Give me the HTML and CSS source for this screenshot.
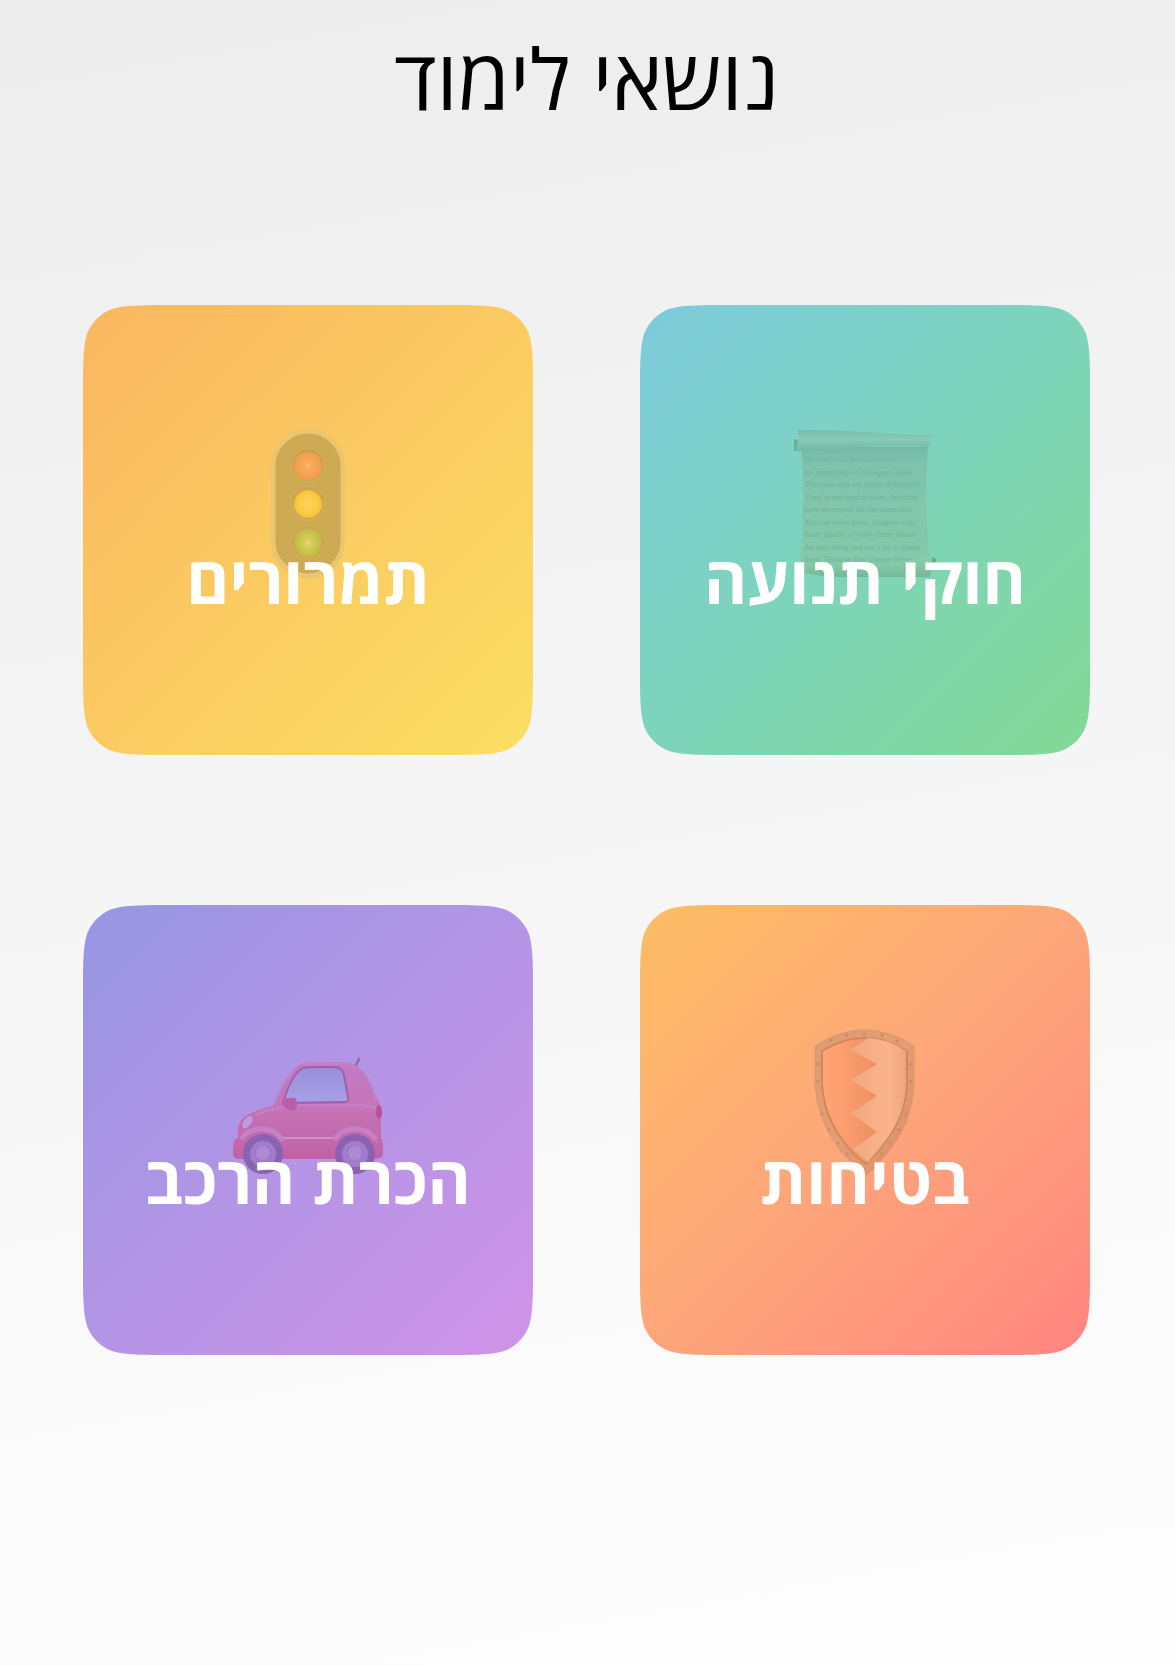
FILE: index.html
```html
<!DOCTYPE html>
<html lang="he" dir="rtl">
<head>
<meta charset="utf-8">
<meta name="viewport" content="width=device-width, initial-scale=1">
<title>נושאי לימוד</title>
<link rel="stylesheet" href="styles.css">
</head>
<body>
<svg class="defs" width="0" height="0" aria-hidden="true">
  <clipPath id="squircle" clipPathUnits="objectBoundingBox">
    <path d="M.153 0H.847C.891 .001 .913 .002 .937 .0095C.961 .019 .981 .039 .9905 .063C.998 .087 .999 .109 1 .153V.847C.999 .891 .998 .913 .9905 .937C.981 .961 .961 .981 .937 .9905C.913 .998 .891 .999 .847 1H.153C.109 .999 .087 .998 .063 .9905C.039 .981 .019 .961 .0095 .937C.002 .913 .001 .891 0 .847V.153C.001 .109 .002 .087 .0095 .063C.019 .039 .039 .019 .063 .0095C.087 .002 .109 .001 .153 0Z"/>
  </clipPath>
</svg>
<main class="page">
  <h1 class="title">נושאי לימוד</h1>
  <nav class="topics" aria-label="נושאי לימוד">
    <a class="card card-laws" href="#laws">
      <svg class="icon" viewBox="0 0 150 150" aria-hidden="true">
        <defs>
          <linearGradient id="roll" x2="0" y2="1"><stop stop-color="#78bdaa"/><stop offset=".45" stop-color="#86cab8"/><stop offset="1" stop-color="#72b7a2"/></linearGradient>
          <linearGradient id="paper" x2="0" y2="1"><stop stop-color="#70b8a6"/><stop offset=".13" stop-color="#7fc3ae"/><stop offset="1" stop-color="#85c9a9"/></linearGradient>
          <linearGradient id="curl" x2="0" y2="1"><stop stop-color="#8bcda9"/><stop offset=".5" stop-color="#83c6a2"/><stop offset="1" stop-color="#73b797"/></linearGradient>
        </defs>
        <path fill="url(#paper)" d="M11 18H138Q134 70 140 136H10Q15 70 11 18Z"/>
        <g class="script">
          <text x="14" y="33">the rebels, the troublemakers,</text>
          <text x="14" y="46">the round pegs in the square holes.</text>
          <text x="15" y="58">The ones who see things differently.</text>
          <text x="15" y="71">They’re not fond of rules. And they</text>
          <text x="14" y="83">have no respect for the status quo.</text>
          <text x="14" y="96">You can quote them, disagree with</text>
          <text x="14" y="108">them, glorify or vilify them. About</text>
          <text x="14" y="121">the only thing you can’t do is ignore</text>
          <text x="14" y="133">them. Because they change things.</text>
        </g>
        <path fill="url(#roll)" d="M8 1Q40 1 75 3Q115 6 143 6Q142 14 138 18Q95 15 60 19Q30 23 4 22V10L8 10Z"/>
        <path fill="#6bae9b" d="M4 10L8 11L6 22H4Z"/>
        <path fill="url(#curl)" d="M10 134Q75 140 125 130Q138 126 145 129L146 134L143 134L140 148H57Q30 148 10 143Z"/>
        <path fill="#69ad8d" d="M142 128Q149 129 145 135L142 134Z"/>
      </svg>
      <span class="label">חוקי תנועה</span>
    </a>
    <a class="card card-signs" href="#signs">
      <svg class="icon" viewBox="0 0 150 150" aria-hidden="true">
        <defs>
          <radialGradient id="red"><stop stop-color="#ffc270"/><stop offset=".2" stop-color="#fbaa5d"/><stop offset="1" stop-color="#f09c4b"/></radialGradient>
          <radialGradient id="amber"><stop stop-color="#ffd35c"/><stop offset=".7" stop-color="#fbcb45"/><stop offset="1" stop-color="#f0bf3b"/></radialGradient>
          <radialGradient id="green"><stop stop-color="#ebd663"/><stop offset=".2" stop-color="#d8d05a"/><stop offset="1" stop-color="#bfbb43"/></radialGradient>
        </defs>
        <rect x="38" width="74" height="150" rx="37" fill="#ebc56d"/>
        <rect x="43" y="5" width="64" height="139" rx="32" fill="#ceaa55" stroke="#c9a75a"/>
        <g fill="#cba750" stroke="#d8b059"><circle cx="75" cy="36" r="17"/><circle cx="75" cy="74" r="17"/><circle cx="75" cy="113" r="17"/></g>
        <path fill="#d49c4e" d="M60 32a16 16 0 0 1 30 0Z"/>
        <path fill="#d0a53f" d="M60 70a16 16 0 0 1 30 0Z"/>
        <circle cx="75" cy="37" r="14" fill="url(#red)"/><circle cx="75" cy="75" r="14" fill="url(#amber)"/><circle cx="75" cy="114" r="14" fill="url(#green)"/>
      </svg>
      <span class="label">תמרורים</span>
    </a>
    <a class="card card-safety" href="#safety">
      <svg class="icon" viewBox="0 0 150 150" aria-hidden="true">
        <defs>
          <linearGradient id="rim" y2="1"><stop stop-color="#db9e72"/><stop offset=".5" stop-color="#e59d73"/><stop offset="1" stop-color="#da9069"/></linearGradient>
          <linearGradient id="left"><stop stop-color="#ffa577"/><stop offset=".2" stop-color="#fd9f70"/><stop offset=".65" stop-color="#ec9062"/><stop offset="1" stop-color="#ec9264"/></linearGradient>
          <linearGradient id="right"><stop stop-color="#f2a97e"/><stop offset=".7" stop-color="#fab38c"/><stop offset="1" stop-color="#eea57d"/></linearGradient>
        </defs>
        <path fill="url(#rim)" stroke="#d9976e" d="M25 17Q74 -15 124 17V55Q122 95 98 123Q87 137 77 146Q64 138 51 122Q27 92 25 55Z"/>
        <path fill="url(#left)" stroke="#d2875f" stroke-width="2" d="M32 22Q74 -4 117 22V55Q116 86 95 113Q86 125 76 135Q64 127 54 113Q34 88 32 55Z"/>
        <path fill="url(#right)" d="M78 9Q98 10 116 22V55Q115 86 95 112Q86 124 78 133L63 120L87 103L61 84L87 67L61 51L87 35L61 21Z"/>
        <g fill="#c98a64"><circle cx="41" cy="11" r="1.5"/><circle cx="57" cy="6" r="1.5"/><circle cx="74" cy="5" r="1.5"/><circle cx="92" cy="6" r="1.5"/><circle cx="107" cy="12" r="1.5"/><circle cx="28" cy="35" r="1.5"/><circle cx="28" cy="52" r="1.5"/><circle cx="32" cy="85" r="1.5"/><circle cx="39" cy="101" r="1.5"/><circle cx="48" cy="114" r="1.5"/><circle cx="57" cy="125" r="1.5"/><circle cx="121" cy="35" r="1.5"/><circle cx="121" cy="52" r="1.5"/><circle cx="116" cy="85" r="1.5"/><circle cx="109" cy="101" r="1.5"/><circle cx="100" cy="114" r="1.5"/><circle cx="92" cy="125" r="1.5"/></g>
      </svg>
      <span class="label">בטיחות</span>
    </a>
    <a class="card card-vehicle" href="#vehicle">
      <svg class="icon" viewBox="0 0 150 150" aria-hidden="true">
        <defs>
          <linearGradient id="paint" x2="0" y2="1"><stop stop-color="#c27bc6"/><stop offset=".5" stop-color="#c573b6"/><stop offset="1" stop-color="#c062a5"/></linearGradient>
          <linearGradient id="glass" x2="0" y2="1"><stop stop-color="#9790d8"/><stop offset="1" stop-color="#a99fe7"/></linearGradient>
          <radialGradient id="hub"><stop stop-color="#b18bd9"/><stop offset=".6" stop-color="#a078cb"/><stop offset="1" stop-color="#a47fcf"/></radialGradient>
        </defs>
        <path stroke="#8c69b5" stroke-width="2.500" stroke-linecap="round" d="M122 38L126 30"/>
        <path fill="url(#paint)" d="M0 118Q0 110 5 109V98Q7 90 15 86Q25 80 40 77Q50 53 59 43Q66 33 76 33H111Q123 34 128 41Q137 50 140 61Q148 75 148 83V109Q151 112 150 126Q148 130 141 130H4Q0 129 0 125Z"/>
        <path fill="none" stroke="#b587d7" stroke-width="2" d="M41 75Q50 53 59 43M133 46Q141 59 143 73"/>
        <path fill="none" stroke="#c77fc6" stroke-width="2" d="M72 35H111Q119 36 124 39M22 86Q48 76 70 76H118Q139 76 143 80"/>
        <path fill="url(#glass)" stroke="#a05fb0" stroke-width="2" d="M50 74Q58 47 68 40Q70 38 80 38H102Q109 38 111 46L115 68Q116 73 112 73Z"/>
        <path fill="#b85fa9" d="M50 71Q54 68 61 69Q64 69 64 75Q64 82 60 82Q53 81 50 76Z"/>
        <ellipse cx="14.500" cy="93" rx="4.500" ry="8" transform="rotate(35 14.500 93)" fill="#bd9ade" stroke="#b867b2"/>
        <ellipse cx="146" cy="83" rx="3" ry="7" fill="#b8519b"/>
        <path stroke="#d58fcd" stroke-width="2" d="M50 109H102"/>
        <path fill="none" stroke="#c77fc6" stroke-width="5" d="M8 110Q15 100 29 100Q43 100 50 112M101 111Q108 100 122 100Q136 100 143 111"/>
        <g fill="#8963b2"><circle cx="30" cy="125" r="20"/><circle cx="122" cy="125" r="20"/></g>
        <g fill="url(#hub)" stroke="#9775c6"><circle cx="30" cy="125" r="13"/><circle cx="122" cy="125" r="13"/></g>
        <g fill="#ae89d6"><circle cx="30" cy="124" r="7"/><circle cx="122" cy="124" r="7"/></g>
      </svg>
      <span class="label">הכרת הרכב</span>
    </a>
  </nav>
</main>
</body>
</html>
```
FILE: styles.css
```css
* { box-sizing: border-box; }

body {
  margin: 0;
  min-height: 100vh;
  background: linear-gradient(170deg, #ededed, #fefefe);
  font-family: "Open Sans", "Noto Sans", sans-serif;
}

.defs { position: absolute; }

.page { padding: 18px 85px 80px 83px; }

.title {
  margin: 0 0 167px;
  font-size: 84px;
  font-weight: 400;
  line-height: 120px;
  text-align: center;
  color: #000;
}

.topics {
  display: grid;
  grid-template-columns: 1fr 1fr;
  gap: 150px 107px;
}

.card {
  display: flex;
  flex-direction: column;
  align-items: center;
  aspect-ratio: 1;
  padding-top: 124px;
  clip-path: url(#squircle);
  color: #fff;
  text-decoration: none;
}

.card-laws { background: linear-gradient(135deg, #7dcbdc, #7dd4bb 50%, #83d995); }
.card-signs { background: linear-gradient(135deg, #fab660, #fbdf63); }
.card-safety { background: linear-gradient(135deg, #fcbd63, #fda67a 50%, #ff8580); }
.card-vehicle { background: linear-gradient(135deg, #9796e3, #d093e8); }

.icon {
  width: 150px;
  height: 150px;
  flex: none;
}

.script {
  direction: ltr;
  font-family: "Liberation Serif", serif;
  font-size: 8px;
  fill: #71b39f;
}

.label {
  position: relative;
  margin-top: -49px;
  font-size: 66px;
  font-weight: 700;
  line-height: 96px;
  white-space: nowrap;
}
```
